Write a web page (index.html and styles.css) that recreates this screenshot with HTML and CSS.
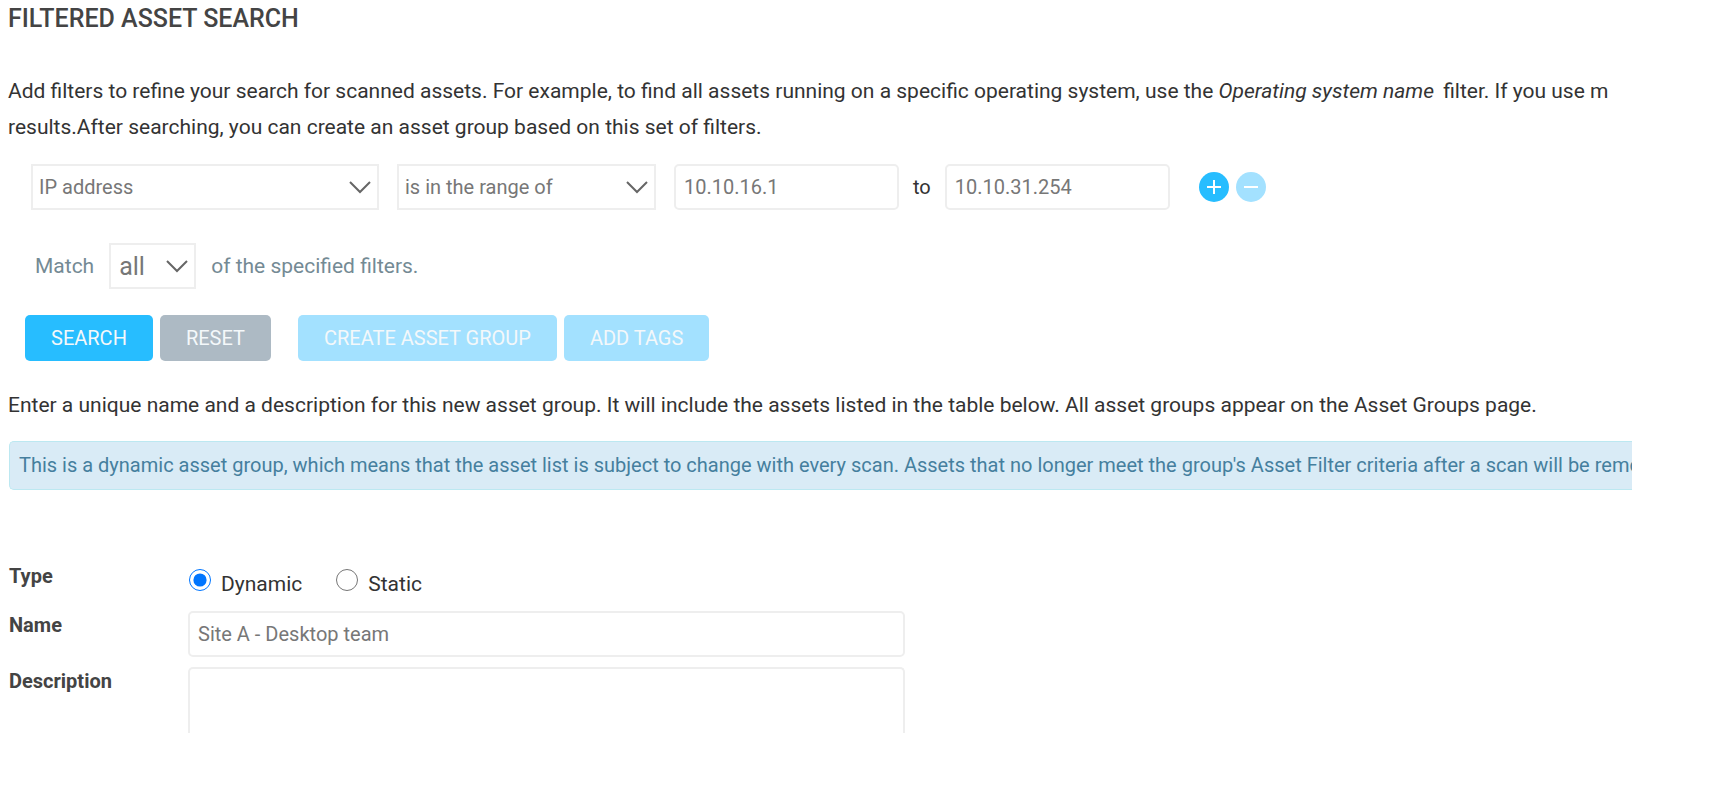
FILE: index.html
```html
<!DOCTYPE html>
<html lang="en">
<head>
  <meta charset="UTF-8">
  <title>Filtered Asset Search</title>
  <meta name="viewport" content="width=device-width, initial-scale=1">
  <link rel="stylesheet" href="styles.css">
</head>
<body>

  <main class="page">
    <h1>FILTERED ASSET SEARCH</h1>

    <p class="intro">
      Add filters to refine your search for scanned assets. For example, to find all assets running on a specific operating system, use the <em>Operating system name</em> filter. If you use m<br>
      results.After searching, you can create an asset group based on this set of filters.
    </p>

    <form>
      <div class="filter-row">
        <span class="select field-select">
          <select aria-label="Filter field">
            <option>IP address</option>
          </select>
          <svg width="22" height="14" viewBox="0 0 22 14"><path d="M1 2l10 10 10-10"/></svg>
        </span>
        <span class="select operator-select">
          <select aria-label="Operator">
            <option>is in the range of</option>
          </select>
          <svg width="22" height="14" viewBox="0 0 22 14"><path d="M1 2l10 10 10-10"/></svg>
        </span>
        <input type="text" class="ip" aria-label="Start address" value="10.10.16.1">
        <label class="to" for="ip-end">to</label>
        <input type="text" class="ip" id="ip-end" value="10.10.31.254">
        <div class="round-buttons">
          <button type="button" class="round" aria-label="Add filter">
            <svg width="16" height="16" viewBox="0 0 16 16"><path d="M8 1v14M1 8h14"/></svg>
          </button>
          <button type="button" class="round light" aria-label="Remove filter">
            <svg width="16" height="16" viewBox="0 0 16 16"><path d="M1 8h14"/></svg>
          </button>
        </div>
      </div>

      <div class="match-row">
        <label for="match">Match</label>
        <span class="select match-select">
          <select id="match">
            <option>all</option>
          </select>
          <svg width="22" height="14" viewBox="0 0 22 14"><path d="M1 2l10 10 10-10"/></svg>
        </span>
        <span>of the specified filters.</span>
      </div>

      <div class="buttons">
        <button type="button" class="btn">SEARCH</button>
        <button type="reset" class="btn grey">RESET</button>
        <button type="button" class="btn light group-btn">CREATE ASSET GROUP</button>
        <button type="button" class="btn light">ADD TAGS</button>
      </div>
    </form>

    <form class="asset-group">
      <p>Enter a unique name and a description for this new asset group. It will include the assets listed in the table below. All asset groups appear on the Asset Groups page.</p>

      <div class="notice">This is a dynamic asset group, which means that the asset list is subject to change with every scan. Assets that no longer meet the group's Asset Filter criteria after a scan will be remove</div>

      <div class="details">
        <span class="name" id="type-label">Type</span>
        <div class="types" role="radiogroup" aria-labelledby="type-label">
          <input type="radio" name="type" id="dynamic" checked>
          <label for="dynamic">Dynamic</label>
          <input type="radio" name="type" id="static">
          <label for="static">Static</label>
        </div>

        <label class="name" for="name">Name</label>
        <input type="text" id="name" value="Site A - Desktop team">

        <label class="name" for="description">Description</label>
        <textarea id="description"></textarea>
      </div>
    </form>
  </main>

</body>
</html>
```

FILE: styles.css
```css
* {
  box-sizing: border-box;
}
body {
  font-family: Roboto, sans-serif;
  font-size: 21px;
  line-height: 36px;
  color: #333;
  background: white;
  margin: 0;
}
.page {
  margin-right: 82px;
  padding-left: 8px;
  overflow: hidden;
}
h1 {
  margin: 0;
  font-size: 25px;
  font-weight: 500;
  line-height: 38px;
  color: #444;
}
p {
  margin: 0;
  white-space: nowrap;
}
.intro {
  margin-top: 35px;
}
.intro em {
  margin-right: 4px;
}
input, select, textarea, button {
  font-family: inherit;
  font-size: 20px;
  color: #777;
}
input[type="text"], select, textarea {
  display: block;
  width: 100%;
  height: 46px;
  padding: 0 8px;
  background: white;
  border: 2px solid #eee;
  border-radius: 5px;
}
.filter-row {
  display: flex;
  align-items: center;
  gap: 18px;
  margin: 19px 0 0 23px;
}
.select {
  position: relative;
}
select {
  appearance: none;
  padding: 0 6px;
  border-radius: 0;
}
.select svg {
  position: absolute;
  top: 16px;
  right: 8px;
  pointer-events: none;
}
svg path {
  fill: none;
  stroke: #666;
  stroke-width: 2;
}
.field-select {
  width: 348px;
}
.operator-select {
  width: 259px;
}
.filter-row .ip {
  width: 225px;
}
.to {
  margin: 0 -4px;
  font-size: 20px;
}
.round-buttons {
  display: flex;
  gap: 7px;
  margin-left: 11px;
}
.round {
  display: flex;
  align-items: center;
  justify-content: center;
  width: 30px;
  height: 30px;
  padding: 0;
  border: none;
  border-radius: 50%;
  background: #27bdff;
}
.round path {
  stroke: white;
}
.match-row {
  display: flex;
  align-items: center;
  gap: 15px;
  margin: 33px 0 0 27px;
  color: #748a94;
}
.match-select {
  width: 87px;
}
.match-select select {
  padding: 0 8px;
  font-size: 25px;
}
.buttons {
  display: flex;
  gap: 7px;
  margin: 26px 0 0 17px;
}
.btn {
  height: 46px;
  padding: 0 26px;
  color: #f4f8fa;
  background: #27bdff;
  border: none;
  border-radius: 5px;
}
.btn.grey {
  background: #adbac4;
}
.btn.light, .round.light {
  background: #a3e1ff;
}
.group-btn {
  margin-left: 20px;
}
.asset-group {
  margin-top: 26px;
}
.notice {
  height: 49px;
  margin: 18px 0 0 1px;
  padding: 0 9px;
  font-size: 20px;
  line-height: 47px;
  white-space: nowrap;
  color: #457f9e;
  background: #d9ebf6;
  border: 1px solid #bce8f1;
  border-right: none;
  border-radius: 5px 0 0 5px;
}
.details {
  display: grid;
  grid-template-columns: 179px 717px;
  row-gap: 10px;
  margin: 72px 0 0 1px;
}
.name {
  font-size: 20px;
  font-weight: bold;
  line-height: 28px;
  color: #444;
}
.types {
  display: flex;
  height: 39px;
}
.types label {
  margin: 4px 33px 0 10px;
}
input[type="radio"] {
  width: 22px;
  height: 22px;
  margin: 7px 0 0 1px;
  accent-color: #0075ff;
}
#description {
  height: 66px;
  border-bottom: none;
  border-radius: 5px 5px 0 0;
  resize: none;
}
```
